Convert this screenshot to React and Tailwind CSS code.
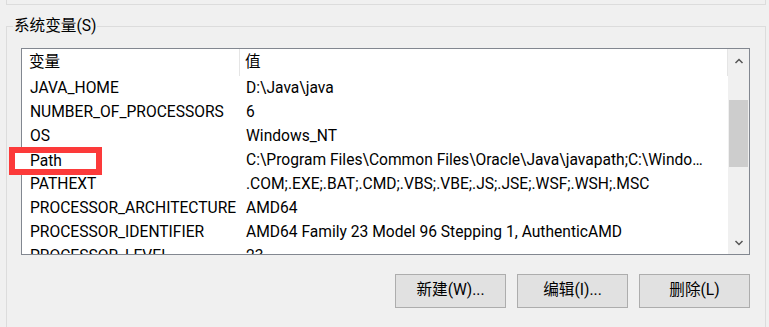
import React from 'react'

const rows = [
  ['JAVA_HOME', 'D:\\Java\\java'],
  ['NUMBER_OF_PROCESSORS', '6'],
  ['OS', 'Windows_NT'],
  ['Path', 'C:\\Program Files\\Common Files\\Oracle\\Java\\javapath;C:\\Windows\\system32;C:\\Windows'],
  ['PATHEXT', '.COM;.EXE;.BAT;.CMD;.VBS;.VBE;.JS;.JSE;.WSF;.WSH;.MSC'],
  ['PROCESSOR_ARCHITECTURE', 'AMD64'],
  ['PROCESSOR_IDENTIFIER', 'AMD64 Family 23 Model 96 Stepping 1, AuthenticAMD'],
  ['PROCESSOR_LEVEL', '23'],
]

const Chevron = ({ down }) => (
  <svg width="10" height="6" viewBox="0 0 10 6" className={down ? 'rotate-180' : ''}>
    <path d="M1.5 5 L5 1.5 L8.5 5" fill="none" stroke="#555" strokeWidth="1.5" />
  </svg>
)

const App = () => {
  return (
    <main
      className='w-[769px] h-[327px] overflow-hidden bg-[#f0f0f0] text-black text-[15.6px]'
      style={{ fontFamily: 'Roboto, "Noto Sans CJK SC", sans-serif' }}
    >
      <div className='ml-[6px] w-[760px] h-[5px] border-l border-r border-b border-[#dcdcdc]'></div>

      <section className='relative ml-[6px] mt-[21px] w-[760px] h-[320px] border-l border-r border-t border-[#dcdcdc]'>
        <span className='absolute -top-[12px] left-[6px] px-[1px] bg-[#f0f0f0] leading-[22px]'>系统变量(S)</span>

        <div className='relative ml-[14px] mt-[21px] w-[729px] h-[207px] border border-[#828790] bg-white flex overflow-hidden'>
          <div className='flex-1 flex flex-col'>
            <div className='flex h-[27px] shrink-0 items-center'>
              <div className='w-[218px] h-full pl-[7px] pt-[1px] flex items-center border-r border-[#e5e5e5]'>变量</div>
              <div className='flex-1 h-full pl-[5px] pt-[1px] flex items-center border-r border-[#e5e5e5]'>值</div>
            </div>
            {rows.map(([name, value]) => (
              <div key={name} className='flex h-[24px] shrink-0 items-center pt-[2px]'>
                <div className='w-[219px] pl-[8px] whitespace-nowrap'>{name === 'Path' ? '' : name}</div>
                <div className='w-[485px] pl-[5px] pr-[12px] truncate'>{value}</div>
              </div>
            ))}
          </div>

          <div className='w-[21px] bg-[#f0f0f0] flex flex-col items-center'>
            <div className='h-[24px] flex items-center justify-center'><Chevron /></div>
            <div className='mt-[27px] w-[19px] h-[67px] bg-[#cdcdcd]'></div>
            <div className='flex-1'></div>
            <div className='h-[22px] flex items-center justify-center'><Chevron down /></div>
          </div>
        </div>

        <div className='flex justify-end gap-[11px] pr-[15px] mt-[19px]'>
          {['新建(W)...', '编辑(I)...', '删除(L)'].map((label) => (
            <button key={label} className='w-[111px] h-[34px] border border-[#adadad] bg-[#e1e1e1] flex items-center justify-center'>
              {label}
            </button>
          ))}
        </div>

        <div className='absolute left-[2px] top-[120px] w-[93px] h-[28px] border-[6px] border-[#fc3a3a] bg-white flex items-center'>
          <span className='pl-[15px] pt-[2px]'>Path</span>
        </div>
      </section>
    </main>
  )
}

export default App
